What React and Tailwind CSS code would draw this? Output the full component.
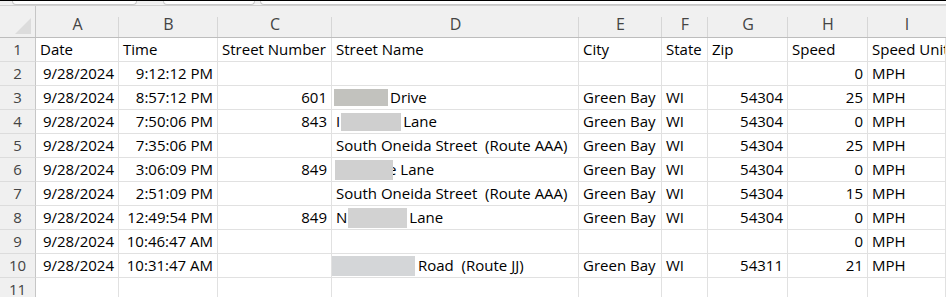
import React from 'react';

const COLS = ['A', 'B', 'C', 'D', 'E', 'F', 'G', 'H', 'I'];

// align: r = right, l = left
const ALIGN = ['r', 'r', 'r', 'l', 'l', 'l', 'r', 'r', 'l'];

const HEADERS = ['Date', 'Time', 'Street Number', 'Street Name', 'City', 'State', 'Zip', 'Speed', 'Speed Unit'];

// street name cells with a grey redaction block in them
const redacted = (pre, pad, box, post, opts = {}) => ({ pre, pad, box, post, ...opts });

const ROWS = [
  ['9/28/2024', '9:12:12 PM', '', '', '', '', '', '0', 'MPH'],
  ['9/28/2024', '8:57:12 PM', '601', redacted('', 2, { w: 54, h: 17, c: 'bg-[#c2c2be]' }, 'Drive'), 'Green Bay', 'WI', '54304', '25', 'MPH'],
  ['9/28/2024', '7:50:06 PM', '843', redacted('I', 4, { w: 60, h: 18, c: 'bg-[#cfcfcf]' }, 'Lane'), 'Green Bay', 'WI', '54304', '0', 'MPH'],
  ['9/28/2024', '7:35:06 PM', '', 'South Oneida Street  (Route AAA)', 'Green Bay', 'WI', '54304', '25', 'MPH'],
  ['9/28/2024', '3:06:09 PM', '849', redacted('', 3, { w: 58, h: 20, c: 'bg-[#d0d0d0]' }, 'e Lane', { overlap: true }), 'Green Bay', 'WI', '54304', '0', 'MPH'],
  ['9/28/2024', '2:51:09 PM', '', 'South Oneida Street  (Route AAA)', 'Green Bay', 'WI', '54304', '15', 'MPH'],
  ['9/28/2024', '12:49:54 PM', '849', redacted('N', 4, { w: 59, h: 20, c: 'bg-[#d2d2d2]' }, 'Lane'), 'Green Bay', 'WI', '54304', '0', 'MPH'],
  ['9/28/2024', '10:46:47 AM', '', '', '', '', '', '0', 'MPH'],
  ['9/28/2024', '10:31:47 AM', '', redacted('', 0, { w: 83, h: 20, c: 'bg-[#d4d6d8]' }, 'Road  (Route JJ)', { gap: 3 }), 'Green Bay', 'WI', '54311', '21', 'MPH'],
  ['', '', '', '', '', '', '', '', ''],
];

const GRID = 'grid grid-cols-[36px_83px_99px_114px_247px_83px_46px_80px_80px_1fr]';

function Redacted({ cell }) {
  return (
    <div className="flex items-center h-full whitespace-pre" style={{ paddingLeft: cell.pad }}>
      {cell.pre && <span>{cell.pre}</span>}
      <span
        className={`inline-block shrink-0 relative z-10 ${cell.box.c}`}
        style={{ width: cell.box.w, height: cell.box.h, marginLeft: cell.pre ? 1 : 0 }}
      />
      <span style={{ marginLeft: cell.overlap ? -5 : cell.gap ?? 2 }}>{cell.post}</span>
    </div>
  );
}

function Cell({ value, align }) {
  if (value && typeof value === 'object') {
    return (
      <div className="h-6 border-r border-b border-[#e1e1e1] overflow-hidden">
        <Redacted cell={value} />
      </div>
    );
  }
  return (
    <div
      className={`h-6 border-r border-b border-[#e1e1e1] flex items-center whitespace-pre overflow-hidden ${
        align === 'r' ? 'justify-end pr-[4px]' : 'pl-[4px]'
      }`}
    >
      {value}
    </div>
  );
}

function RowHeader({ n }) {
  return (
    <div className="h-6 bg-[#f0f0f0] border-r border-b border-r-[#c6c6c6] border-b-[#dcdcdc] flex items-center justify-center text-[#444]">
      {n}
    </div>
  );
}

function TopStrip() {
  return (
    <div className="h-[6px] bg-[#f0f0f0] border-t border-black border-b border-b-[#d0d0d0] flex overflow-hidden">
      <div className="ml-[12px] w-[125px] h-full bg-white border border-t-0 border-[#c8c8c8] rounded-b-[6px]" />
      <div className="ml-[26px] w-[92px] h-full bg-white border border-t-0 border-[#c8c8c8] rounded-b-[6px]" />
      <div className="ml-[5px] flex-1 h-full bg-white border border-t-0 border-r-0 border-[#c8c8c8] rounded-bl-[6px]" />
    </div>
  );
}

export default function App() {
  return (
    <div className="w-[946px] h-[297px] overflow-hidden bg-white font-['Open_Sans',sans-serif] text-[15px] text-black leading-none">
      <TopStrip />

      {/* column letters */}
      <div className={`${GRID} h-[32px] bg-[#f0f0f0] border-b border-[#bdbdbd]`}>
        <div className="border-r border-[#c6c6c6] relative">
          <svg className="absolute right-[4px] bottom-[3px]" width="16" height="16" viewBox="0 0 16 16">
            <polygon points="16,0 16,16 0,16" fill="#dcdcdc" />
          </svg>
        </div>
        {COLS.map((c, i) => (
          <div key={c} className="relative flex items-end justify-center pb-[5px] text-[16px] text-[#444]">
            {c}
            {i < COLS.length - 1 && (
              <span className="absolute right-0 bottom-0 w-px h-[20px] bg-[#d6d6d6]" />
            )}
          </div>
        ))}
      </div>

      <div className={GRID}>
        <RowHeader n={1} />
        {HEADERS.map((h) => (
          <Cell key={h} value={h} align="l" />
        ))}
        {ROWS.map((row, r) => (
          <React.Fragment key={r}>
            <RowHeader n={r + 2} />
            {row.map((v, i) => (
              <Cell key={i} value={v} align={ALIGN[i]} />
            ))}
          </React.Fragment>
        ))}
      </div>
    </div>
  );
}
